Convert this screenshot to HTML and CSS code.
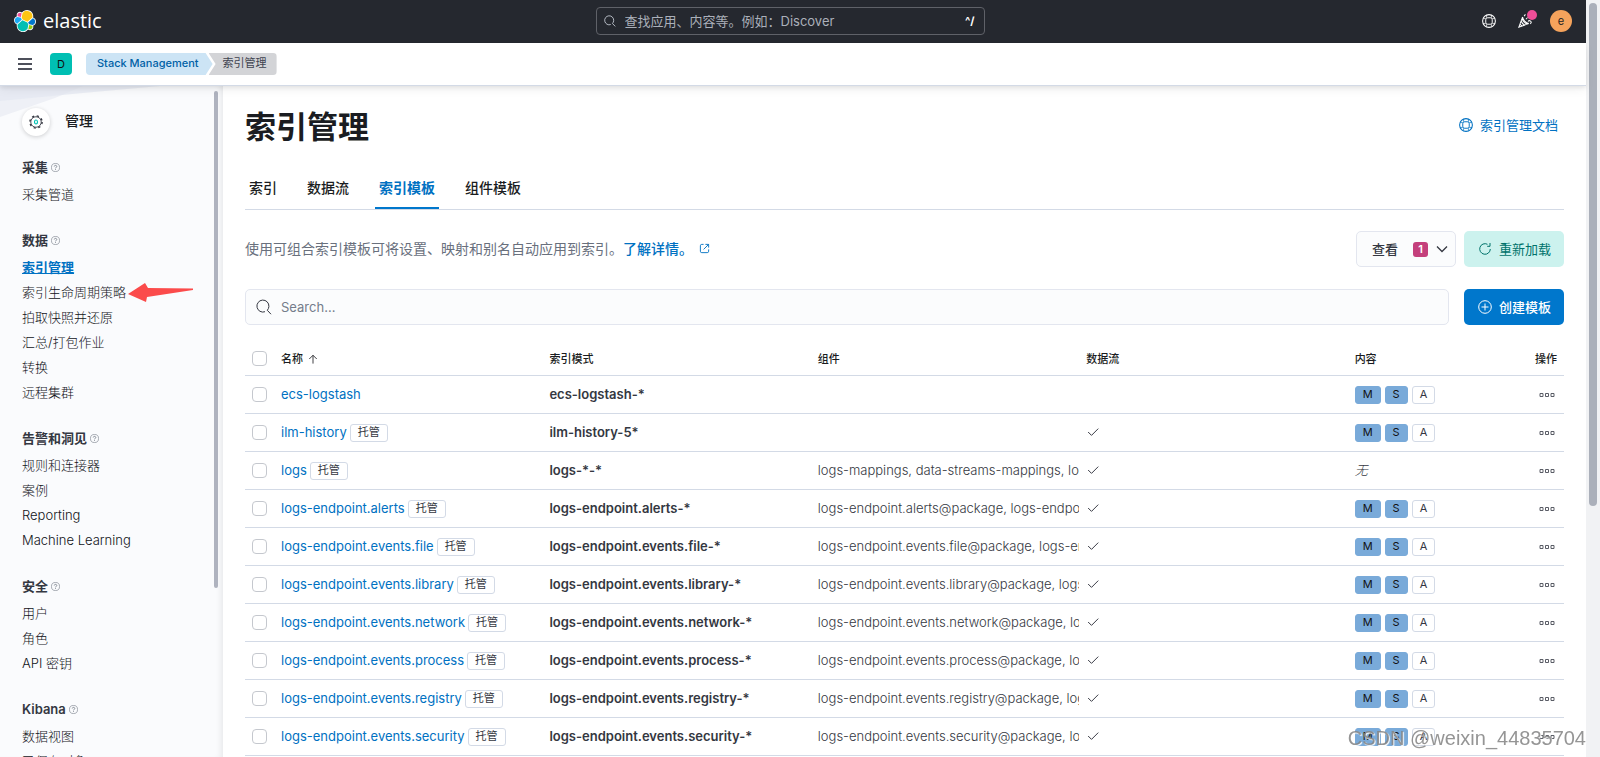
FILE: index.html
```html
<!DOCTYPE html>
<html lang="zh-CN">
<head>
<meta charset="utf-8">
<title>索引管理 - Elastic</title>
<link rel="stylesheet" href="styles.css">
</head>
<body>
<svg class="sprite" aria-hidden="true">
  <symbol id="i-search" viewBox="0 0 16 16"><path d="M9 12.700A6 6 0 1 1 12.900 7.500C12.800 9 12.200 10.200 11.300 11.300L15 15.200" fill="none" stroke="currentColor"/></symbol>
  <symbol id="i-help" viewBox="0 0 16 16"><g fill="none" stroke="currentColor"><circle cx="8" cy="8" r="7.300" stroke-width="1.200"/><rect x="4.300" y="4.300" width="7.400" height="7.400" rx="2.200" stroke-width="1.100"/><path d="M5.500 4.500 5 1.500M4.500 5.500 1.500 5M10.500 4.500 11 1.500M11.500 5.500 14.500 5M5.500 11.500 5 14.500M4.500 10.500 1.500 11M10.500 11.500 11 14.500M11.500 10.500 14.500 11" stroke-width=".8"/></g></symbol>
  <symbol id="i-q" viewBox="0 0 16 16"><circle cx="8" cy="8" r="7.200" fill="none" stroke="currentColor"/><path d="M5.800 6.200C5.800 3.500 10.300 3.600 10.300 6.200 10.300 7.800 8 7.800 8 9.600M8 11v1.400" fill="none" stroke="currentColor" stroke-width="1.400"/></symbol>
  <symbol id="i-check" viewBox="0 0 16 16"><path d="M1.500 8 6 12.500 15 3.500" fill="none" stroke="currentColor" stroke-width="1.300"/></symbol>
  <symbol id="i-more" viewBox="0 0 16 6"><path d="M1 1.500h3v3H1zM6.500 1.500h3v3h-3zM12 1.500h3v3h-3z" fill="none" stroke="currentColor"/></symbol>
</svg>

<div class="app">
  <header class="topbar">
    <a class="brand" href="#" aria-label="elastic">
      <svg class="brand-mark" viewBox="0 0 32 32" aria-hidden="true">
        <path d="M32 16.800c0-2.700-1.700-5-4.200-5.900.1-.6.2-1.200.2-1.800C28 4.100 23.900 0 18.900 0c-2.900 0-5.600 1.400-7.300 3.700-.9-.7-1.900-1-3-1-2.600 0-4.700 2.100-4.700 4.700 0 .6.100 1.100.3 1.600C1.700 9.900 0 12.300 0 15c0 2.700 1.700 5.100 4.200 6-.1.600-.2 1.200-.2 1.800C4 27.900 8.100 32 13.100 32c2.900 0 5.600-1.400 7.300-3.800.8.700 1.900 1.100 3 1.100 2.600 0 4.700-2.100 4.700-4.700 0-.6-.1-1.100-.3-1.600 2.500-.9 4.200-3.300 4.200-6.200Z" fill="#fff"/>
        <path d="m12.600 13.800 7 3.200 7.100-6.200c.1-.5.200-1 .2-1.600a8 8 0 0 0-14.500-4.500l-1.200 6.100 1.400 3Z" fill="#FEC514"/>
        <path d="M5.300 21.200c-.1.500-.2 1.100-.2 1.600a8 8 0 0 0 14.600 4.500l1.200-6.100-1.600-3-7-3.200-7 6.200Z" fill="#00BFB3"/>
        <path d="m5.200 9.100 4.800 1.200L11.100 4.800a3.800 3.800 0 0 0-5.900 4.300Z" fill="#F04E98"/>
        <path d="M4.800 10.200C2.700 10.900 1.200 13 1.200 15.200c0 2.200 1.400 4.100 3.400 4.900l6.700-6.100-1.200-2.700-5.300-1.100Z" fill="#1BA9F5"/>
        <path d="M20.900 27.200a3.800 3.800 0 0 0 5.900-4.300L22 21.800l-1.100 5.400Z" fill="#93C90E"/>
        <path d="m21.900 20.600 5.300 1.200c2.100-.7 3.600-2.700 3.600-5 0-2.200-1.400-4.100-3.400-4.900l-6.900 6.100 1.400 2.600Z" fill="#07C"/>
      </svg>
      <span class="brand-name">elastic</span>
    </a>
    <label class="global-search">
      <svg class="ico-s" aria-hidden="true"><use href="#i-search"/></svg>
      <input type="search" aria-label="查找应用" placeholder="查找应用、内容等。例如：Discover">
      <kbd>^/</kbd>
    </label>
    <div class="top-actions">
      <button class="plain" aria-label="帮助"><svg class="ico" aria-hidden="true"><use href="#i-help"/></svg></button>
      <button class="plain news" aria-label="新闻">
        <svg class="ico" viewBox="0 0 16 16" aria-hidden="true"><path d="M5.200 3.500 1 15l11.300-4M5.200 3.500c.4 3 3.500 6.600 7.100 7.500M5.200 3.500C3.800 6.500 8 12.200 12.300 11M3.600 8c.7 2 2.300 4 4 4.800M2.400 11.500 4.600 14M7 2.500l1.500-2M9 6l2-2M11.500 8.500c1-1.500 3-1 3.500.5.300 1-.3 2-1.200 2" fill="none" stroke="currentColor" stroke-width="1.200"/></svg>
        <span class="dot"></span>
      </button>
      <button class="avatar" aria-label="账户">e</button>
    </div>
  </header>

  <div class="subbar">
    <button class="plain burger" aria-label="菜单"><span></span><span></span><span></span></button>
    <button class="space">D</button>
    <nav class="crumbs" aria-label="路径">
      <a class="crumb crumb-first" href="#">Stack Management</a>
      <span class="crumb crumb-last">索引管理</span>
    </nav>
  </div>

  <div class="body">
    <aside class="side">
      <svg class="side-art" viewBox="0 0 222 60" aria-hidden="true"><path d="M0 0H83L55 12 0 31Z" fill="#eef0f6"/><path d="M0 0H160L83 7 0 15Z" fill="#e4e8f1" fill-opacity=".75"/></svg>
      <div class="side-title">
        <span class="side-icon">
          <svg class="ico" viewBox="0 0 16 16" aria-hidden="true"><circle cx="8" cy="8" r="6" fill="none" stroke="#343741" stroke-width="1"/><circle cx="8" cy="8" r="7" fill="none" stroke="#343741" stroke-width="1.600" stroke-dasharray="2.500 2.998"/><ellipse cx="8" cy="8" rx="1.700" ry="2.300" fill="none" stroke="#00bfb3" stroke-width="1.300"/></svg>
        </span>
        <h2>管理</h2>
      </div>
      <nav class="side-nav" aria-label="管理">
        <section><h3>采集 <svg class="q" aria-hidden="true"><use href="#i-q"/></svg></h3>
          <a href="#">采集管道</a></section>
        <section><h3>数据 <svg class="q" aria-hidden="true"><use href="#i-q"/></svg></h3>
          <a class="current" href="#">索引管理</a>
          <a class="marked" href="#">索引生命周期策略<svg class="arrow" viewBox="0 0 66 20" aria-hidden="true"><path d="M0 11 17 0 20 5 65 5.500V7L19 14 18 19Z" fill="#fb4b4b"/></svg></a>
          <a href="#">拍取快照并还原</a><a href="#">汇总/打包作业</a><a href="#">转换</a><a href="#">远程集群</a></section>
        <section><h3>告警和洞见 <svg class="q" aria-hidden="true"><use href="#i-q"/></svg></h3>
          <a href="#">规则和连接器</a><a href="#">案例</a><a href="#">Reporting</a><a href="#">Machine Learning</a></section>
        <section><h3>安全 <svg class="q" aria-hidden="true"><use href="#i-q"/></svg></h3>
          <a href="#">用户</a><a href="#">角色</a><a href="#">API 密钥</a></section>
        <section><h3>Kibana <svg class="q" aria-hidden="true"><use href="#i-q"/></svg></h3>
          <a href="#">数据视图</a><a href="#">已保存对象</a></section>
      </nav>
      <span class="side-thumb"></span>
    </aside>

    <main class="main">
      <div class="title-row">
        <h1>索引管理</h1>
        <a class="doc-link" href="#"><svg class="ico" aria-hidden="true"><use href="#i-help"/></svg>索引管理文档</a>
      </div>
      <nav class="tabs" aria-label="索引管理">
        <a href="#">索引</a><a href="#">数据流</a><a class="on" href="#">索引模板</a><a href="#">组件模板</a>
      </nav>
      <div class="row intro">
        <p>使用可组合索引模板可将设置、映射和别名自动应用到索引。<a href="#">了解详情。<svg class="ext" viewBox="0 0 12 12" aria-hidden="true"><path d="M5 1.500H3Q1.500 1.500 1.500 3V9Q1.500 10.500 3 10.500H9Q10.500 10.500 10.500 9V7M7 1.500H10.500V5M10.500 1.500 5 7" fill="none" stroke="currentColor"/></svg></a></p>
        <button class="btn btn-view">查看 <span class="count">1</span><svg class="chev" viewBox="0 0 12 12" aria-hidden="true"><path d="M1 3.500 6 8.500 11 3.500" fill="none" stroke="currentColor" stroke-width="1.300"/></svg></button>
        <button class="btn btn-reload"><svg class="ico-b" viewBox="0 0 14 14" aria-hidden="true"><path d="M9.500 2.300A5.300 5.300 0 1 0 12.300 7M9.200 4.300H12V1" fill="none" stroke="currentColor"/></svg>重新加载</button>
      </div>
      <div class="row tools">
        <label class="search"><svg class="ico-l" aria-hidden="true"><use href="#i-search"/></svg><input type="search" aria-label="Search" placeholder="Search..."></label>
        <button class="btn btn-create"><svg class="ico-b" viewBox="0 0 14 14" aria-hidden="true"><circle cx="7" cy="7" r="6.300" fill="none" stroke="currentColor"/><path d="M7 3.500v7M3.500 7h7" stroke="currentColor"/></svg>创建模板</button>
      </div>

      <table class="grid">
        <colgroup><col class="c-check"><col class="c-wide"><col class="c-wide"><col class="c-wide"><col class="c-wide"><col><col class="c-act"></colgroup>
        <thead><tr>
          <th><input type="checkbox" aria-label="全选"></th>
          <th>名称 <svg class="sort" viewBox="0 0 12 12" aria-hidden="true"><path d="M6 11.500V1.500M1.500 6 6 1.500 10.500 6" fill="none" stroke="currentColor"/></svg></th>
          <th>索引模式</th><th>组件</th><th>数据流</th><th>内容</th><th class="act">操作</th>
        </tr></thead>
        <tbody>
          <tr><td><input type="checkbox" aria-label="ecs-logstash"></td><td><a href="#">ecs-logstash</a></td><td class="pat">ecs-logstash-*</td><td></td><td></td><td><span class="tag on">M</span><span class="tag on">S</span><span class="tag">A</span></td><td class="act"><button class="plain" aria-label="操作"><svg class="more"><use href="#i-more"/></svg></button></td></tr>
          <tr><td><input type="checkbox" aria-label="ilm-history"></td><td><a href="#">ilm-history</a><span class="badge">托管</span></td><td class="pat">ilm-history-5*</td><td></td><td><svg class="tick"><use href="#i-check"/></svg></td><td><span class="tag on">M</span><span class="tag on">S</span><span class="tag">A</span></td><td class="act"><button class="plain" aria-label="操作"><svg class="more"><use href="#i-more"/></svg></button></td></tr>
          <tr><td><input type="checkbox" aria-label="logs"></td><td><a href="#">logs</a><span class="badge">托管</span></td><td class="pat">logs-*-*</td><td class="parts">logs-mappings, data-streams-mappings, logs-settings</td><td><svg class="tick"><use href="#i-check"/></svg></td><td><em>无</em></td><td class="act"><button class="plain" aria-label="操作"><svg class="more"><use href="#i-more"/></svg></button></td></tr>
          <tr><td><input type="checkbox" aria-label="logs-endpoint.alerts"></td><td><a href="#">logs-endpoint.alerts</a><span class="badge">托管</span></td><td class="pat">logs-endpoint.alerts-*</td><td class="parts">logs-endpoint.alerts@package, logs-endpoint.alerts@custom</td><td><svg class="tick"><use href="#i-check"/></svg></td><td><span class="tag on">M</span><span class="tag on">S</span><span class="tag">A</span></td><td class="act"><button class="plain" aria-label="操作"><svg class="more"><use href="#i-more"/></svg></button></td></tr>
          <tr><td><input type="checkbox" aria-label="logs-endpoint.events.file"></td><td><a href="#">logs-endpoint.events.file</a><span class="badge">托管</span></td><td class="pat">logs-endpoint.events.file-*</td><td class="parts">logs-endpoint.events.file@package, logs-endpoint.events.file@custom</td><td><svg class="tick"><use href="#i-check"/></svg></td><td><span class="tag on">M</span><span class="tag on">S</span><span class="tag">A</span></td><td class="act"><button class="plain" aria-label="操作"><svg class="more"><use href="#i-more"/></svg></button></td></tr>
          <tr><td><input type="checkbox" aria-label="logs-endpoint.events.library"></td><td><a href="#">logs-endpoint.events.library</a><span class="badge">托管</span></td><td class="pat">logs-endpoint.events.library-*</td><td class="parts">logs-endpoint.events.library@package, logs-endpoint.events.library@custom</td><td><svg class="tick"><use href="#i-check"/></svg></td><td><span class="tag on">M</span><span class="tag on">S</span><span class="tag">A</span></td><td class="act"><button class="plain" aria-label="操作"><svg class="more"><use href="#i-more"/></svg></button></td></tr>
          <tr><td><input type="checkbox" aria-label="logs-endpoint.events.network"></td><td><a href="#">logs-endpoint.events.network</a><span class="badge">托管</span></td><td class="pat">logs-endpoint.events.network-*</td><td class="parts">logs-endpoint.events.network@package, logs-endpoint.events.network@custom</td><td><svg class="tick"><use href="#i-check"/></svg></td><td><span class="tag on">M</span><span class="tag on">S</span><span class="tag">A</span></td><td class="act"><button class="plain" aria-label="操作"><svg class="more"><use href="#i-more"/></svg></button></td></tr>
          <tr><td><input type="checkbox" aria-label="logs-endpoint.events.process"></td><td><a href="#">logs-endpoint.events.process</a><span class="badge">托管</span></td><td class="pat">logs-endpoint.events.process-*</td><td class="parts">logs-endpoint.events.process@package, logs-endpoint.events.process@custom</td><td><svg class="tick"><use href="#i-check"/></svg></td><td><span class="tag on">M</span><span class="tag on">S</span><span class="tag">A</span></td><td class="act"><button class="plain" aria-label="操作"><svg class="more"><use href="#i-more"/></svg></button></td></tr>
          <tr><td><input type="checkbox" aria-label="logs-endpoint.events.registry"></td><td><a href="#">logs-endpoint.events.registry</a><span class="badge">托管</span></td><td class="pat">logs-endpoint.events.registry-*</td><td class="parts">logs-endpoint.events.registry@package, logs-endpoint.events.registry@custom</td><td><svg class="tick"><use href="#i-check"/></svg></td><td><span class="tag on">M</span><span class="tag on">S</span><span class="tag">A</span></td><td class="act"><button class="plain" aria-label="操作"><svg class="more"><use href="#i-more"/></svg></button></td></tr>
          <tr><td><input type="checkbox" aria-label="logs-endpoint.events.security"></td><td><a href="#">logs-endpoint.events.security</a><span class="badge">托管</span></td><td class="pat">logs-endpoint.events.security-*</td><td class="parts">logs-endpoint.events.security@package, logs-endpoint.events.security@custom</td><td><svg class="tick"><use href="#i-check"/></svg></td><td><span class="tag on">M</span><span class="tag on">S</span><span class="tag">A</span></td><td class="act"><button class="plain" aria-label="操作"><svg class="more"><use href="#i-more"/></svg></button></td></tr>
        </tbody>
      </table>
    </main>
  </div>
</div>
<div class="page-scroll" aria-hidden="true"><span></span></div>
<div class="watermark">CSDN @weixin_44835704</div>
</body>
</html>
```

FILE: styles.css
```css
* { box-sizing: border-box; }

body {
  margin: 0;
  height: 100vh;
  overflow: hidden;
  display: grid;
  grid-template-columns: 1fr 14px;
  font: 13px/20px Inter, "Noto Sans CJK SC", sans-serif;
  color: #343741;
  background: #fff;
}

h1, h2, h3, p { margin: 0; }
a { color: #0071c2; text-decoration: none; }
button, input { font: inherit; color: inherit; }
button { cursor: pointer; }
svg { flex: none; }
.sprite { position: absolute; width: 0; height: 0; }
.plain { border: 0; padding: 0; background: none; }
.ico { width: 14px; height: 14px; }
.ico-s { width: 12px; height: 12px; }
.ico-b { width: 14px; height: 14px; }
.ico-l { width: 16px; height: 16px; }

.app { display: flex; flex-direction: column; min-width: 0; height: 100vh; }

/* top bar */
.topbar {
  flex: none;
  height: 43px;
  background: #25282f;
  color: #fff;
  display: grid;
  grid-template-columns: 1fr 389px 1fr;
  align-items: center;
  padding: 0 14px 1px 8px;
}
.brand { display: flex; align-items: center; gap: 7px; padding-left: 6px; color: #fff; }
.brand-mark { width: 22px; height: 22px; }
.brand-name { font: 400 20px/24px "Open Sans", sans-serif; }
.global-search {
  height: 28px;
  border: 1px solid #5f6168;
  border-radius: 4px;
  display: flex;
  align-items: center;
  gap: 9px;
  padding: 0 9px 0 7px;
  color: #dfe5ef;
}
.global-search input { flex: 1; min-width: 0; border: 0; outline: 0; padding: 0; background: none; }
.global-search input::placeholder { color: #abb0ba; opacity: 1; }
.global-search kbd { font: 700 11px/16px Inter, sans-serif; color: #fff; }
.top-actions { display: flex; justify-content: flex-end; align-items: center; gap: 22px; }
.top-actions .plain { display: flex; }
.news { position: relative; }
.dot { position: absolute; top: -4px; right: -5px; width: 10px; height: 10px; border-radius: 50%; background: #f04e98; }
.avatar { width: 22px; height: 22px; margin-left: -4px; border: 0; border-radius: 50%; padding: 0; background: #f5a35c; color: #222; font-size: 11px; line-height: 22px; }

/* breadcrumb bar */
.subbar {
  flex: none;
  height: 43px;
  border-bottom: 1px solid #d3dae6;
  box-shadow: 0 2px 4px rgba(0, 0, 0, .08), 0 4px 10px rgba(0, 0, 0, .05);
  background: #fff;
  display: flex;
  align-items: center;
  padding: 0 18px;
  z-index: 2;
}
.burger { width: 14px; display: flex; flex-direction: column; gap: 3px; }
.burger span { height: 2px; background: #4d505b; }
.space { width: 22px; height: 22px; margin: 0 14px 0 18px; border: 0; border-radius: 4px; padding: 0; background: #00bfb3; color: #111; font-size: 11px; line-height: 22px; }
.crumbs { display: flex; font-size: 11px; line-height: 20px; }
.crumb { height: 22px; }
.crumb-first { padding: 0 14px 0 11px; background: #cce4f5; color: #0061a6; font-weight: 500; border-radius: 4px 0 0 4px; clip-path: polygon(0 0, calc(100% - 7px) 0, 100% 50%, calc(100% - 7px) 100%, 0 100%); }
.crumb-last { margin-left: -4px; padding: 0 10px 0 14px; background: #d3d4d7; color: #404350; border-radius: 0 4px 4px 0; clip-path: polygon(0 0, 100% 0, 100% 100%, 0 100%, 7px 50%); }

/* layout */
.body { flex: 1; min-height: 0; display: grid; grid-template-columns: 223px 1fr; }

/* sidebar */
.side { position: relative; overflow: hidden; background: #fafbfd; padding: 22px 22px 0; box-shadow: inset -6px 0 6px -4px rgba(0, 0, 0, .08); }
.side-art { position: absolute; top: 0; left: 0; width: 222px; height: 60px; }
.side-title { position: relative; display: flex; align-items: center; gap: 15px; height: 28px; margin-bottom: 17px; }
.side-icon { width: 28px; height: 28px; border-radius: 50%; background: #fff; display: grid; place-items: center; box-shadow: 0 1px 4px rgba(0, 0, 0, .18); }
.side-title h2 { font-size: 14px; line-height: 20px; font-weight: 500; color: #1a1c21; padding-bottom: 2px; }
.side-nav { position: relative; }
.side-nav section { margin-bottom: 19px; }
.side-nav h3 { display: flex; align-items: center; gap: 3px; font-size: 13px; line-height: 29px; font-weight: 600; }
.side-nav a { display: block; width: max-content; line-height: 25px; color: #111318; font-weight: 300; }
.side-nav .current { color: #0071c2; font-weight: 600; text-decoration: underline; }
.q { width: 9px; height: 9px; color: #69707d; }
.marked { position: relative; }
.arrow { position: absolute; left: 106px; top: 3px; width: 66px; height: 20px; }
.side-thumb { position: absolute; top: 5px; right: 5px; width: 4px; height: 74%; border-radius: 2px; background: #afb3bf; }

/* main */
.main { min-width: 0; overflow: hidden; padding: 19px 22px 0; }
.title-row { display: flex; justify-content: space-between; height: 44px; }
h1 { font-size: 31px; line-height: 44px; font-weight: 700; color: #1a1c21; }
.doc-link { display: flex; align-items: center; gap: 7px; height: 40px; padding-right: 6px; }
.tabs { display: flex; gap: 22px; margin-top: 18px; height: 43px; border-bottom: 1px solid #d3dae6; }
.tabs a { padding: 0 4px; height: 42px; line-height: 42px; font-size: 14px; font-weight: 500; color: #1a1c21; }
.tabs .on { color: #0071c2; font-weight: 600; border-bottom: 2px solid #0077cc; }
.row { display: flex; align-items: center; height: 36px; }
.intro { margin-top: 21px; gap: 8px; }
.intro p { flex: 1; font-size: 14px; color: #69707d; }
.intro p a { font-weight: 500; }
.ext { width: 11px; height: 11px; margin-left: 6px; }
.btn { width: 100px; height: 36px; border: 0; border-radius: 5px; padding: 0 14px; display: flex; align-items: center; gap: 7px; white-space: nowrap; }
.btn-view { background: #fbfcfd; border: 1px solid #e3e6ef; font-weight: 500; padding: 0 7px 0 15px; }
.count { width: 15px; height: 15px; margin: 0 1px 0 8px; border-radius: 3px; background: #c4407c; color: #fff; font-size: 11px; line-height: 14px; font-weight: 600; text-align: center; flex: none; }
.chev { width: 12px; height: 12px; }
.btn-reload { background: #ccf2ee; color: #00726b; }
.tools { margin-top: 22px; gap: 15px; }
.search { flex: 1; height: 36px; border: 1px solid #e3e6ef; border-radius: 5px; background: #fbfcfd; display: flex; align-items: center; gap: 9px; padding: 0 10px; }
.search input { flex: 1; border: 0; outline: 0; padding: 0; background: none; }
.search input::placeholder { color: #757c8b; opacity: 1; }
.btn-create { background: #0077cc; color: #fff; font-weight: 500; }

/* table */
.grid { width: 100%; margin-top: 18px; table-layout: fixed; border-collapse: collapse; }
.c-check { width: 29px; }
.c-wide { width: 20.35%; }
.c-act { width: 60px; }
.grid th { height: 32px; padding: 0 0 0 7px; text-align: left; font-size: 11px; line-height: 16px; font-weight: 500; color: #1a1c21; border-bottom: 1px solid #d3dae6; }
.grid td { height: 38px; padding: 0 0 0 7px; overflow: hidden; white-space: nowrap; border-bottom: 1px solid #d3dae6; }
.grid .act { text-align: right; padding: 0 7px 0 0; }
.act .plain { padding-right: 2px; color: #5a5d66; }
.pat { font-weight: 600; }
.parts, .grid em { font-weight: 300; }
.grid input { appearance: none; display: block; width: 15px; height: 15px; margin: 0; border: 1px solid #c5c8ce; border-radius: 4px; background: #fff; }
.sort { width: 10px; height: 10px; margin-left: 2px; vertical-align: -1px; }
.badge, .tag { display: inline-block; height: 18px; padding: 0 7px; border: 1px solid #d3dae6; border-radius: 3px; font-size: 11px; line-height: 15px; vertical-align: middle; }
.badge { margin-left: 3px; }
.tag { margin-right: 4px; }
.tag.on { background: #79aad9; border-color: #79aad9; color: #111; }
.tick { display: block; width: 12px; height: 12px; margin-left: 1px; }
.more { width: 16px; height: 6px; vertical-align: middle; }

/* page scrollbar */
.page-scroll { background: #f1f2f4; padding: 3px; }
.page-scroll span { display: block; height: 67%; width: 8px; border-radius: 4px; background: #abb0ba; }

.watermark { position: fixed; right: 14px; bottom: 5px; z-index: 5; font: 20px/28px "Liberation Sans", sans-serif; color: rgba(130, 130, 130, .85); text-shadow: 1px 1px 1px #fff; }
```
